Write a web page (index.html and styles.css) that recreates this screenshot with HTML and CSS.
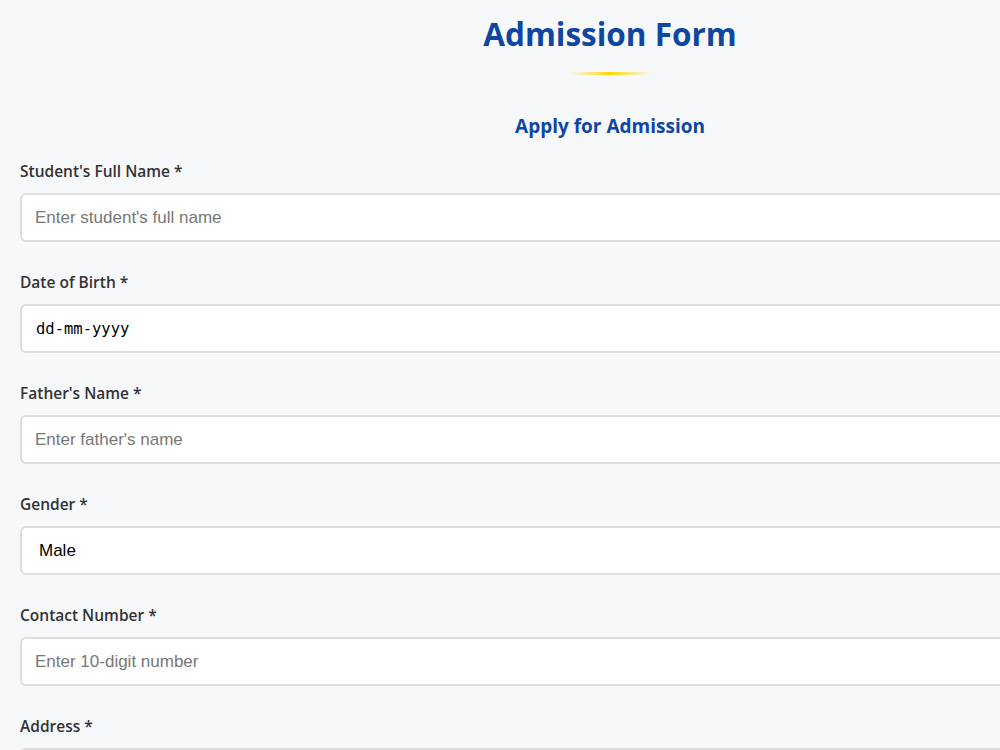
FILE: index.html
```html
<!DOCTYPE html>
<html lang="en">

<head>
    <meta charset="UTF-8">
    <meta name="viewport" content="width=device-width, initial-scale=1.0">
    <title>Admission Form</title>
    <link rel="stylesheet" href="styles.css">
</head>

<body>
    <div class="container">
        <div class="page-header">
            <h1>Admission Form</h1>
            <div class="underline"></div>
        </div>

        <h2>Apply for Admission</h2>

        <form class="admission-form">
            <div class="form-group">
                <label for="name">Student's Full Name *</label>
                <input type="text" id="name" placeholder="Enter student's full name">
            </div>
            <div class="form-group">
                <label for="dob">Date of Birth *</label>
                <input type="text" id="dob" class="date-input" value="dd-mm-yyyy">
            </div>
            <div class="form-group">
                <label for="father">Father's Name *</label>
                <input type="text" id="father" placeholder="Enter father's name">
            </div>
            <div class="form-group">
                <label for="gender">Gender *</label>
                <select id="gender">
                    <option>Male</option>
                    <option>Female</option>
                    <option>Other</option>
                </select>
            </div>
            <div class="form-group">
                <label for="contact">Contact Number *</label>
                <input type="text" id="contact" placeholder="Enter 10-digit number">
            </div>
            <div class="form-group">
                <label for="address">Address *</label>
                <textarea id="address" rows="3" placeholder="Enter full address"></textarea>
            </div>
        </form>
    </div>
</body>

</html>
```

FILE: styles.css
```css
body {
    margin: 0;
    padding: 0;
    background-color: #f7f8fa;
    font-family: "Open Sans", Arial, sans-serif;
    color: #333;
}

.container {
    width: 1180px;
    padding: 11px 20px 40px;
}

.page-header {
    text-align: center;
}

h1 {
    margin: 0;
    font-size: 31.5px;
    line-height: 45px;
    font-weight: 700;
    color: #0d47a1;
}

.underline {
    width: 82px;
    height: 3px;
    margin: 16px auto 0;
    background: linear-gradient(to right, rgba(255, 215, 0, 0), #ffd700 50%, rgba(255, 215, 0, 0));
}

h2 {
    margin: 37px 0 19px;
    text-align: center;
    font-size: 19px;
    line-height: 28px;
    font-weight: 700;
    color: #0d47a1;
}

.form-group {
    margin-bottom: 28px;
}

.form-group label {
    display: block;
    margin-bottom: 10px;
    font-size: 15.5px;
    line-height: 24px;
    font-weight: 600;
    color: #333;
}

.form-group input,
.form-group select,
.form-group textarea {
    display: block;
    width: 100%;
    box-sizing: border-box;
    height: 49px;
    padding: 0 13px;
    border: 2px solid #dddddd;
    border-radius: 6px;
    background-color: #fff;
    font-family: "Liberation Sans", Arial, sans-serif;
    font-size: 17px;
    color: #000;
    outline: none;
}

.form-group input::placeholder,
.form-group textarea::placeholder {
    color: #777777;
}

.form-group .date-input {
    padding-left: 14px;
    font-family: "DejaVu Sans Mono", monospace;
    font-size: 15.5px;
}

.form-group select {
    appearance: none;
    padding-left: 17px;
}

.form-group textarea {
    height: 100px;
    padding-top: 12px;
    resize: vertical;
}
```
